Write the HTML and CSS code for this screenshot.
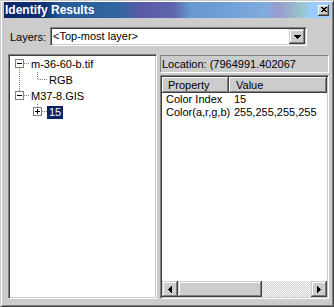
FILE: index.html
```html
<!DOCTYPE html>
<html>
<head>
<meta charset="utf-8">
<title>Identify Results</title>
<link rel="stylesheet" href="styles.css">
</head>
<body>
<div class="window">
  <div class="caption">
    <span class="caption-title">Identify Results</span>
    <span class="close-btn">
      <svg width="6" height="5" viewBox="0 0 6 5" shape-rendering="crispEdges"><path d="M0 0h2v1H0zM4 0h2v1H4zM1 1h4v1H1zM2 2h2v1H2zM1 3h4v1H1zM0 4h2v1H0zM4 4h2v1H4z"/></svg>
    </span>
  </div>

  <div class="layers-row">
    <span class="layers-label">Layers:</span>
    <div class="combo">
      <span class="combo-text">&lt;Top-most layer&gt;</span>
      <span class="combo-btn">
        <svg width="7" height="4" viewBox="0 0 7 4" shape-rendering="crispEdges"><path d="M0 0h7v1H0zM1 1h5v1H1zM2 2h3v1H2zM3 3h1v1H3z"/></svg>
      </span>
    </div>
  </div>

  <div class="panes">
    <div class="tree">
      <div class="tree-row">
        <svg class="tree-lines" width="19" height="16" shape-rendering="crispEdges">
          <path class="dots" d="M9.5 12V16M14 7.5H19"/>
          <rect class="box" x="5.5" y="3.5" width="8" height="8"/>
          <path class="sign" d="M7 7.5H12"/>
        </svg>
        <span class="tree-label">m-36-60-b.tif</span>
      </div>
      <div class="tree-row">
        <svg class="tree-lines" width="37" height="16" shape-rendering="crispEdges">
          <path class="dots" d="M9.5 0V16M27.5 0V8M28 7.5H37"/>
        </svg>
        <span class="tree-label">RGB</span>
      </div>
      <div class="tree-row">
        <svg class="tree-lines" width="19" height="16" shape-rendering="crispEdges">
          <path class="dots" d="M9.5 0V3M14 7.5H19"/>
          <rect class="box" x="5.5" y="3.5" width="8" height="8"/>
          <path class="sign" d="M7 7.5H12"/>
        </svg>
        <span class="tree-label">M37-8.GIS</span>
      </div>
      <div class="tree-row">
        <svg class="tree-lines" width="37" height="16" shape-rendering="crispEdges">
          <path class="dots" d="M27.5 0V3M32 7.5H37"/>
          <rect class="box" x="23.5" y="3.5" width="8" height="8"/>
          <path class="sign" d="M25 7.5H30M27.5 5V10"/>
        </svg>
        <span class="tree-label selected">15</span>
      </div>
    </div>

    <div class="right-col">
      <div class="location">Location: (7964991.402067</div>
      <div class="list">
        <div class="list-head">
          <div class="col-head col-prop">Property</div>
          <div class="col-head col-val">Value</div>
        </div>
        <div class="list-body">
          <div class="list-row"><span class="cell-prop">Color Index</span><span class="cell-val">15</span></div>
          <div class="list-row"><span class="cell-prop">Color(a,r,g,b)</span><span class="cell-val">255,255,255,255</span></div>
        </div>
        <div class="hscroll">
          <span class="sb-btn">
            <svg width="4" height="7" viewBox="0 0 4 7" shape-rendering="crispEdges"><path d="M3 0h1v7H3zM2 1h1v5H2zM1 2h1v3H1zM0 3h1v1H0z"/></svg>
          </span>
          <span class="sb-thumb"></span>
          <span class="sb-track"></span>
          <span class="sb-btn">
            <svg width="4" height="7" viewBox="0 0 4 7" shape-rendering="crispEdges"><path d="M0 0h1v7H0zM1 1h1v5H1zM2 2h1v3H2zM3 3h1v1H3z"/></svg>
          </span>
        </div>
      </div>
    </div>
  </div>
</div>
</body>
</html>
```

FILE: styles.css
```css
* { box-sizing: border-box; }

html, body {
  margin: 0;
  padding: 0;
  background: #cccccc;
}

body {
  font-family: "Liberation Sans", Arial, sans-serif;
  font-size: 11px;
  color: #000;
}

.window {
  width: 334px;
  height: 307px;
  background: #cccccc;
  border: 1px solid;
  border-color: #cccccc #404040 #404040 #cccccc;
  box-shadow: inset 1px 1px #ffffff, inset -1px -1px #808080;
  padding: 1px 2px 2px 3px;
  display: flex;
  flex-direction: column;
}

/* caption */
.caption {
  height: 16px;
  flex: none;
  display: flex;
  align-items: center;
  justify-content: space-between;
  padding: 0 2px 0 1px;
  background: linear-gradient(to right,
    #0a2466 0%, #0e2f72 12%, #245a96 18%, #32679f 35%,
    #5a5aa6 42%, #5f66ac 52%, #6699cc 57%, #6f9fd6 68%,
    #80acdf 80%, #9a9acc 84%, #99c6cc 91%, #99ccff 94%, #a0ccf8 100%);
}

.caption-title {
  color: #ffffff;
  font-weight: bold;
  font-size: 12px;
  line-height: 16px;
}

.close-btn {
  width: 11px;
  height: 11px;
  background: #cccccc;
  box-shadow: inset -1px -1px #404040, inset 1px 1px #ffffff, inset -2px -2px #808080;
  display: flex;
  align-items: center;
  justify-content: center;
  padding-bottom: 1px;
}

/* layers row */
.layers-row {
  margin-top: 9px;
  height: 19px;
  flex: none;
  display: flex;
  align-items: center;
}

.layers-label {
  width: 46px;
  padding-left: 6px;
}

.combo {
  width: 257px;
  height: 19px;
  background: #ffffff;
  border: 1px solid;
  border-color: #808080 #ffffff #ffffff #808080;
  box-shadow: inset 1px 1px #404040, inset -1px -1px #cccccc;
  padding: 1px;
  display: flex;
}

.combo-text {
  flex: 1;
  line-height: 15px;
  padding-left: 1px;
}

.combo-btn {
  width: 16px;
  background: #cccccc;
  box-shadow: inset -1px -1px #404040, inset 1px 1px #cccccc, inset -2px -2px #808080, inset 2px 2px #ffffff;
  display: flex;
  align-items: center;
  justify-content: center;
}

/* panes */
.panes {
  flex: 1;
  margin: 8px 2px 5px 4px;
  display: flex;
  gap: 3px;
  min-height: 0;
}

.tree {
  width: 149px;
  background: #ffffff;
  border: 1px solid;
  border-color: #808080 #ffffff #ffffff #808080;
  box-shadow: inset 1px 1px #404040, inset -1px -1px #cccccc;
  padding: 1px;
}

.tree-row {
  height: 16px;
  display: flex;
  align-items: flex-start;
}

.tree-lines {
  flex: none;
  display: block;
}

.tree-lines .dots {
  fill: none;
  stroke: #808080;
  stroke-width: 1;
  stroke-dasharray: 1 1;
}

.tree-lines .box {
  fill: #ffffff;
  stroke: #808080;
  stroke-width: 1;
}

.tree-lines .sign {
  fill: none;
  stroke: #000000;
  stroke-width: 1;
}

.tree-label {
  margin-top: 2px;
  height: 13px;
  line-height: 13px;
  padding: 0 2px;
}

.tree-label.selected {
  background: #0a246a;
  color: #ffffff;
}

/* right column */
.right-col {
  flex: 1;
  margin-top: 1px;
  display: flex;
  flex-direction: column;
}

.location {
  height: 18px;
  flex: none;
  border: 1px solid;
  border-color: #808080 #ffffff #ffffff #808080;
  padding: 1px 2px 0 1px;
  line-height: 15px;
  white-space: nowrap;
  overflow: hidden;
}

.list {
  flex: 1;
  margin-top: 2px;
  background: #ffffff;
  border: 1px solid;
  border-color: #808080 #ffffff #ffffff #808080;
  box-shadow: inset 1px 1px #404040, inset -1px -1px #cccccc;
  padding: 1px;
  display: flex;
  flex-direction: column;
}

.list-head {
  height: 16px;
  flex: none;
  display: flex;
}

.col-head {
  background: #cccccc;
  box-shadow: inset -1px -1px #404040, inset 1px 1px #ffffff, inset -2px -2px #808080;
  line-height: 14px;
  padding-top: 1px;
}

.col-prop {
  width: 67px;
  padding-left: 6px;
}

.col-val {
  flex: 1;
  padding-left: 7px;
}

.list-body {
  flex: 1;
}

.list-row {
  height: 13px;
  line-height: 13px;
  display: flex;
  white-space: nowrap;
}

.cell-prop {
  width: 67px;
  padding-left: 4px;
}

.cell-val {
  padding-left: 5px;
}

.hscroll {
  height: 16px;
  flex: none;
  display: flex;
}

.sb-btn {
  width: 16px;
  background: #cccccc;
  box-shadow: inset -1px -1px #404040, inset 1px 1px #cccccc, inset -2px -2px #808080, inset 2px 2px #ffffff;
  display: flex;
  align-items: center;
  justify-content: center;
}

.sb-thumb {
  width: 84px;
  background: #cccccc;
  box-shadow: inset -1px -1px #404040, inset 1px 1px #cccccc, inset -2px -2px #808080, inset 2px 2px #ffffff;
}

.sb-track {
  flex: 1;
  background: repeating-conic-gradient(#ffffff 0 25%, #cccccc 0 50%) 0 0 / 2px 2px;
}
```
